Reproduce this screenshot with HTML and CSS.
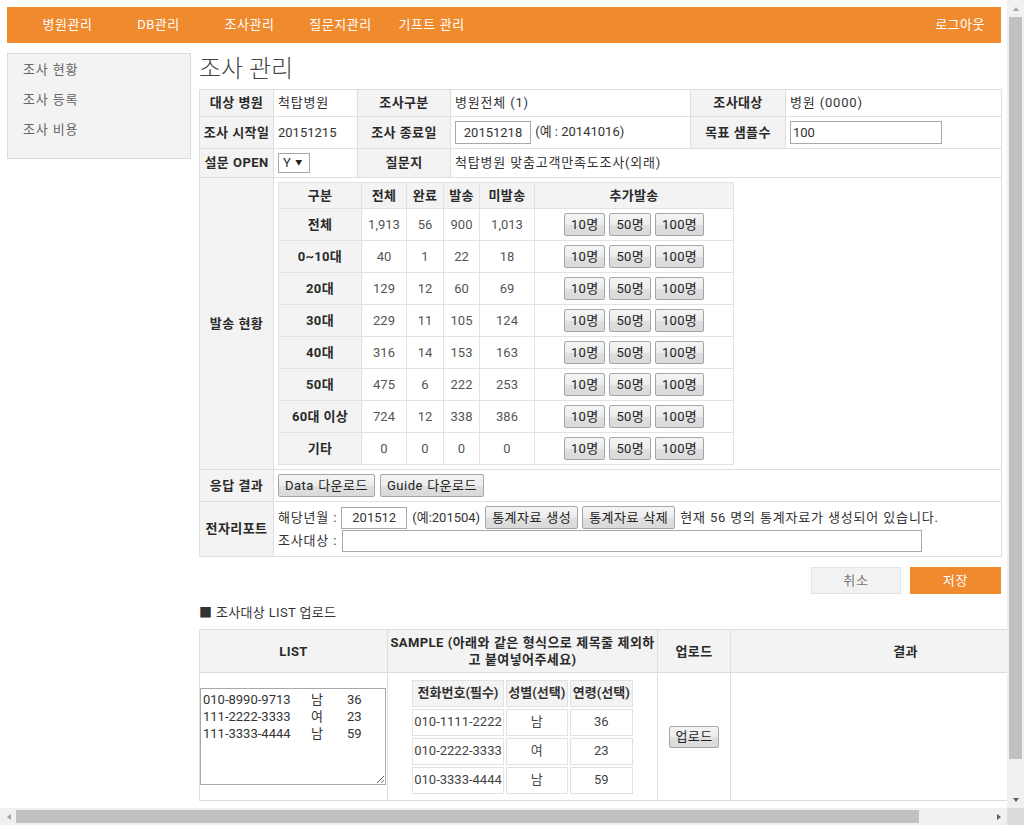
FILE: index.html
```html
<!DOCTYPE html>
<html lang="ko">
<head>
<meta charset="utf-8">
<title>조사 관리</title>
<link rel="stylesheet" href="styles.css">
</head>
<body>
<div class="page">
  <header class="topnav">
    <nav class="menu">
      <a href="#">병원관리</a>
      <a href="#">DB관리</a>
      <a href="#">조사관리</a>
      <a href="#">질문지관리</a>
      <a href="#">기프트 관리</a>
    </nav>
    <a href="#" class="logout">로그아웃</a>
  </header>

  <div class="layout">
    <aside class="sidebar">
      <ul>
        <li>조사 현황</li>
        <li>조사 등록</li>
        <li>조사 비용</li>
      </ul>
    </aside>

    <main class="main">
      <h1 class="title">조사 관리</h1>

      <table class="form">
        <colgroup>
          <col class="fc1"><col class="fc2"><col class="fc3"><col class="fc4"><col class="fc5"><col class="fc6">
        </colgroup>
        <tbody>
          <tr>
            <th>대상 병원</th>
            <td>척탑병원</td>
            <th>조사구분</th>
            <td>병원전체 (1)</td>
            <th>조사대상</th>
            <td>병원 (0000)</td>
          </tr>
          <tr>
            <th>조사 시작일</th>
            <td class="num">20151215</td>
            <th>조사 종료일</th>
            <td><input class="inp date" type="text" value="20151218"> <span class="num">(예 : 20141016)</span></td>
            <th>목표 샘플수</th>
            <td><input class="inp sample" type="text" value="100"></td>
          </tr>
          <tr>
            <th>설문 OPEN</th>
            <td><span class="select"><select class="sel"><option>Y</option><option>N</option></select></span></td>
            <th>질문지</th>
            <td colspan="3">척탑병원 맞춤고객만족도조사(외래)</td>
          </tr>
          <tr>
            <th>발송 현황</th>
            <td colspan="5" class="inner">
              <table class="stat">
                <colgroup>
                  <col class="sc1"><col class="sc2"><col class="sc3"><col class="sc4"><col class="sc5"><col class="sc6">
                </colgroup>
                <thead>
                  <tr><th>구분</th><th>전체</th><th>완료</th><th>발송</th><th>미발송</th><th>추가발송</th></tr>
                </thead>
                <tbody>
                  <tr><th>전체</th><td>1,913</td><td>56</td><td>900</td><td>1,013</td><td><div class="btns"><button class="btn">10명</button><button class="btn">50명</button><button class="btn">100명</button></div></td></tr>
                  <tr><th>0~10대</th><td>40</td><td>1</td><td>22</td><td>18</td><td><div class="btns"><button class="btn">10명</button><button class="btn">50명</button><button class="btn">100명</button></div></td></tr>
                  <tr><th>20대</th><td>129</td><td>12</td><td>60</td><td>69</td><td><div class="btns"><button class="btn">10명</button><button class="btn">50명</button><button class="btn">100명</button></div></td></tr>
                  <tr><th>30대</th><td>229</td><td>11</td><td>105</td><td>124</td><td><div class="btns"><button class="btn">10명</button><button class="btn">50명</button><button class="btn">100명</button></div></td></tr>
                  <tr><th>40대</th><td>316</td><td>14</td><td>153</td><td>163</td><td><div class="btns"><button class="btn">10명</button><button class="btn">50명</button><button class="btn">100명</button></div></td></tr>
                  <tr><th>50대</th><td>475</td><td>6</td><td>222</td><td>253</td><td><div class="btns"><button class="btn">10명</button><button class="btn">50명</button><button class="btn">100명</button></div></td></tr>
                  <tr><th>60대 이상</th><td>724</td><td>12</td><td>338</td><td>386</td><td><div class="btns"><button class="btn">10명</button><button class="btn">50명</button><button class="btn">100명</button></div></td></tr>
                  <tr><th>기타</th><td>0</td><td>0</td><td>0</td><td>0</td><td><div class="btns"><button class="btn">10명</button><button class="btn">50명</button><button class="btn">100명</button></div></td></tr>
                </tbody>
              </table>
            </td>
          </tr>
          <tr>
            <th>응답 결과</th>
            <td colspan="5"><div class="line"><button class="btn">Data 다운로드</button><button class="btn">Guide 다운로드</button></div></td>
          </tr>
          <tr>
            <th>전자리포트</th>
            <td colspan="5" class="report">
              <div class="line">
                <span>해당년월 :</span>
                <input class="inp ym" type="text" value="201512">
                <span class="num">(예:201504)</span>
                <button class="btn">통계자료 생성</button>
                <button class="btn">통계자료 삭제</button>
                <span class="note">현재 56 명의 통계자료가 생성되어 있습니다.</span>
              </div>
              <div class="line line2">
                <span>조사대상 :</span>
                <input class="inp target" type="text" value="">
              </div>
            </td>
          </tr>
        </tbody>
      </table>

      <div class="actions">
        <button class="btn-cancel">취소</button>
        <button class="btn-save">저장</button>
      </div>

      <h2 class="sec-title">■ 조사대상 LIST 업로드</h2>

      <table class="upload">
        <colgroup>
          <col class="uc1"><col class="uc2"><col class="uc3"><col class="uc4">
        </colgroup>
        <thead>
          <tr>
            <th>LIST</th>
            <th>SAMPLE (아래와 같은 형식으로 제목줄 제외하<br>고 붙여넣어주세요)</th>
            <th>업로드</th>
            <th>결과</th>
          </tr>
        </thead>
        <tbody>
          <tr>
            <td class="list-cell"><textarea class="list">010-8990-9713	남	36
111-2222-3333	여	23
111-3333-4444	남	59</textarea></td>
            <td>
              <table class="sample">
                <thead>
                  <tr><th>전화번호(필수)</th><th>성별(선택)</th><th>연령(선택)</th></tr>
                </thead>
                <tbody>
                  <tr><td>010-1111-2222</td><td>남</td><td>36</td></tr>
                  <tr><td>010-2222-3333</td><td>여</td><td>23</td></tr>
                  <tr><td>010-3333-4444</td><td>남</td><td>59</td></tr>
                </tbody>
              </table>
            </td>
            <td><button class="btn up">업로드</button></td>
            <td></td>
          </tr>
        </tbody>
      </table>
    </main>
  </div>
</div>

<div class="sb-v" aria-hidden="true">
  <span class="sb-btn"><span class="tri tri-up"></span></span>
  <span class="sb-thumb-v"></span>
  <span class="sb-fill"></span>
  <span class="sb-btn"><span class="tri tri-down"></span></span>
</div>
<div class="sb-h" aria-hidden="true">
  <span class="sb-btn"><span class="tri tri-left"></span></span>
  <span class="sb-thumb-h"></span>
  <span class="sb-fill"></span>
  <span class="sb-btn"><span class="tri tri-right"></span></span>
</div>
<div class="sb-corner" aria-hidden="true"></div>
</body>
</html>
```
FILE: styles.css
```css
* { box-sizing: border-box; }

html { overflow: hidden; }

body {
  margin: 0;
  padding: 7px;
  font-family: "Roboto", "Noto Sans CJK KR", sans-serif;
  font-size: 13px;
  line-height: 18px;
  letter-spacing: 0.8px;
  word-spacing: 0.2px;
  color: #333;
  background: #fff;
}

button, select, textarea {
  letter-spacing: inherit;
  word-spacing: inherit;
}

.num { letter-spacing: 0; word-spacing: 0; }

.page { width: 994px; }

/* top navigation */
.topnav {
  display: flex;
  align-items: center;
  justify-content: space-between;
  height: 36px;
  background: #f08a2e;
  padding: 0 16px 0 15px;
}
.menu { display: flex; }
.menu a {
  width: 91px;
  text-align: center;
  color: #fff;
  text-decoration: none;
  letter-spacing: 0.5px;
}
.logout { color: #fff; text-decoration: none; letter-spacing: 0.5px; }

/* layout */
.layout {
  display: flex;
  align-items: flex-start;
  gap: 8px;
  margin-top: 10px;
}

.sidebar {
  width: 184px;
  height: 106px;
  background: #f3f3f3;
  border: 1px solid #dcdcdc;
  padding: 1px 0 0 15px;
}
.sidebar ul { list-style: none; margin: 0; padding: 0; }
.sidebar li { height: 30px; line-height: 30px; color: #666; }

.main { width: 802px; }

.title {
  margin: 0 0 4px;
  height: 32px;
  font-size: 24px;
  font-weight: 300;
  line-height: 32px;
  letter-spacing: 0;
  word-spacing: 0;
  color: #444;
}

/* main form table */
.form {
  width: 802px;
  border-collapse: collapse;
  table-layout: fixed;
}
.fc1 { width: 74px; }
.fc2 { width: 84px; }
.fc3 { width: 93px; }
.fc4 { width: 240px; }
.fc5 { width: 95px; }
.fc6 { width: 216px; }

.form > tbody > tr > th,
.form > tbody > tr > td {
  border: 1px solid #dedede;
  padding: 4px 4px;
  height: 27px;
}
.form > tbody > tr > th {
  background: #f3f3f3;
  font-weight: bold;
  text-align: center;
  padding: 4px 0;
  white-space: nowrap;
  letter-spacing: 0.4px;
  color: #2a2a2a;
}
.form > tbody > tr > td { text-align: left; }
.form > tbody > tr > td.inner { padding: 4px; }

.inp {
  height: 23px;
  border: 1px solid #a9a9a9;
  font: inherit;
  letter-spacing: 0;
  color: #333;
  padding: 0 2px;
  vertical-align: middle;
  background: #fff;
}
.inp.date { width: 76px; text-align: center; }
.inp.sample { width: 152px; }
.inp.ym { width: 66px; height: 22px; text-align: center; }
.inp.target { width: 580px; height: 22px; }

.select {
  position: relative;
  display: inline-block;
  vertical-align: middle;
}
.select::after {
  content: "▼";
  position: absolute;
  right: 7px;
  top: 50%;
  transform: translateY(-50%);
  font-size: 7px;
  line-height: 7px;
  color: #222;
  pointer-events: none;
}
.sel {
  -webkit-appearance: none;
  appearance: none;
  width: 32px;
  height: 20px;
  border: 1px solid #a9a9a9;
  border-radius: 0;
  padding: 0 0 0 4px;
  font: inherit;
  color: #333;
  background: #fff;
  display: block;
}

/* stat table */
.stat {
  width: 455px;
  border-collapse: collapse;
  table-layout: fixed;
}
.sc1 { width: 83px; }
.sc2 { width: 45px; }
.sc3 { width: 37px; }
.sc4 { width: 36px; }
.sc5 { width: 55px; }
.sc6 { width: 199px; }

.stat th,
.stat td {
  border: 1px solid #e2e2e2;
  padding: 0 1px;
  text-align: center;
  white-space: nowrap;
  letter-spacing: 0.3px;
}
.stat th {
  background: #f3f3f3;
  font-weight: bold;
  color: #2a2a2a;
}
.stat thead th { height: 26px; }
.stat td { color: #555; background: #fff; letter-spacing: 0; }
.stat tbody th, .stat tbody td { height: 32px; }

.btns {
  display: flex;
  justify-content: center;
  gap: 4px;
}

.btn {
  height: 23px;
  padding: 0 6px;
  font: inherit;
  color: #222;
  border: 1px solid #a6a6a6;
  border-radius: 2px;
  background: linear-gradient(#f5f5f5 0%, #ececec 50%, #e0e0e0 51%, #d9d9d9 100%);
  line-height: 21px;
  white-space: nowrap;
  cursor: pointer;
}
.stat .btn { letter-spacing: 0.3px; }

.line {
  display: flex;
  align-items: center;
  gap: 5px;
}
.line .btn { flex: none; letter-spacing: 0.5px; word-spacing: 0.5px; }
.line .note { margin-left: 1px; white-space: nowrap; }
.report { padding: 4px 4px 4px 5px; }
.report .line { height: 23px; gap: 4px; }
.report .line .num { margin: 0 1px; }
.report .line2 { height: 22px; margin-top: 1px; gap: 5px; }

/* actions */
.actions {
  display: flex;
  justify-content: flex-end;
  gap: 9px;
  margin-top: 10px;
}
.btn-cancel,
.btn-save {
  height: 27px;
  font: inherit;
  border: 1px solid transparent;
  cursor: pointer;
}
.btn-cancel {
  width: 90px;
  background: #f2f2f2;
  border-color: #e3e3e3;
  color: #777;
}
.btn-save {
  width: 91px;
  background: #f08a2e;
  border-color: #f08a2e;
  color: #fff;
}

.sec-title {
  margin: 10px 0 8px;
  font-size: 13px;
  font-weight: normal;
  line-height: 17px;
  letter-spacing: 0.3px;
  color: #333;
}

/* upload table */
.upload {
  width: 881px;
  border-collapse: collapse;
  table-layout: fixed;
}
.uc1 { width: 188px; }
.uc2 { width: 270px; }
.uc3 { width: 73px; }
.uc4 { width: 350px; }

.upload > thead > tr > th {
  background: #f3f3f3;
  border: 1px solid #dedede;
  font-weight: bold;
  line-height: 17px;
  padding: 4px 0;
  height: 43px;
  text-align: center;
  letter-spacing: 0.4px;
  word-spacing: 0.5px;
  color: #2a2a2a;
}
.upload > tbody > tr > td {
  border: 1px solid #dedede;
  height: 128px;
  padding: 0;
  text-align: center;
  vertical-align: middle;
}
.upload > tbody > tr > td.list-cell { padding: 0 1px 0 0; }

.list {
  display: block;
  width: 100%;
  height: 97px;
  margin: 0;
  border: 1px solid #a9a9a9;
  padding: 2px;
  font: inherit;
  line-height: 17px;
  letter-spacing: 0;
  word-spacing: 0;
  color: #333;
  tab-size: 36px;
  resize: both;
}

.sample {
  margin: 0 auto;
  border-collapse: separate;
  border-spacing: 2px;
}
.sample th,
.sample td {
  border: 1px solid #e2e2e2;
  height: 27px;
  padding: 0 1px;
  white-space: nowrap;
  text-align: center;
  letter-spacing: 0;
}
.sample th { background: #f3f3f3; font-weight: bold; }
.sample td { background: #fff; color: #444; }
.sample td:first-child { width: 89px; }
.sample td:nth-child(2) { width: 62px; }
.sample td:nth-child(3) { width: 63px; }

.btn.up { height: 22px; line-height: 20px; letter-spacing: 0.3px; }

/* simulated browser scrollbars */
.sb-v {
  position: fixed;
  top: 0;
  right: 0;
  width: 17px;
  height: 808px;
  background: #f0f0f0;
  display: flex;
  flex-direction: column;
  align-items: center;
}
.sb-h {
  position: fixed;
  left: 0;
  bottom: 0;
  width: 1007px;
  height: 17px;
  background: #f0f0f0;
  display: flex;
  align-items: center;
}
.sb-corner {
  position: fixed;
  right: 0;
  bottom: 0;
  width: 17px;
  height: 17px;
  background: #dcdcdc;
}
.sb-btn {
  flex: none;
  width: 17px;
  height: 17px;
  display: flex;
  align-items: center;
  justify-content: center;
}
.sb-fill { flex: 1; }
.sb-thumb-v {
  flex: none;
  width: 13px;
  height: 742px;
  background: #c1c1c1;
}
.sb-thumb-h {
  flex: none;
  width: 903px;
  height: 13px;
  margin-left: -1px;
  background: #c1c1c1;
}
.tri { width: 0; height: 0; border: 3px solid transparent; }
.tri-up { border-bottom: 4px solid #a3a3a3; border-top: 0; }
.tri-down { border-top: 4px solid #606060; border-bottom: 0; }
.tri-left { border-right: 4px solid #a3a3a3; border-left: 0; }
.tri-right { border-left: 4px solid #606060; border-right: 0; }
```
